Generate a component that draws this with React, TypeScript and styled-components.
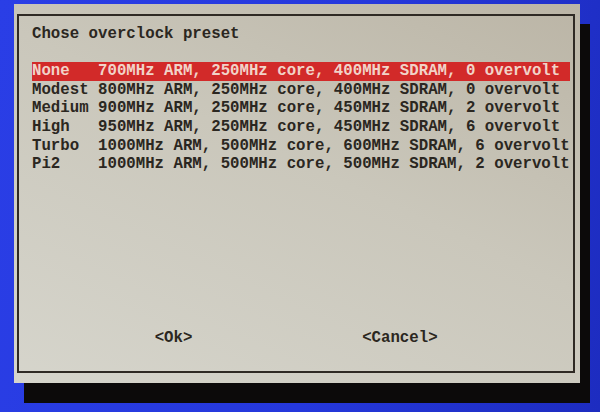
import React from 'react'
import styled, { createGlobalStyle } from 'styled-components'

const GlobalStyle = createGlobalStyle`
  html, body {
    margin: 0;
    padding: 0;
    background: #2436d8;
  }
`

const Screen = styled.div`
  width: 600px;
  height: 412px;
  box-sizing: border-box;
  padding: 4px 0 0 14px;
  background: linear-gradient(100deg, #2a3ee6 0%, #2538dc 55%, #1d2cc0 100%);
  overflow: hidden;
`

const Dialog = styled.section`
  width: 566px;
  height: 379px;
  box-sizing: border-box;
  padding: 10px 5px 10px 3px;
  display: flex;
  background: linear-gradient(205deg, #bbb5a6 0%, #cac7bb 45%, #d6d5cc 100%);
  box-shadow: 10px 20px 0 #0c0a0a;
`

const Frame = styled.div`
  flex: 1;
  display: flex;
  flex-direction: column;
  border: 2px solid #2f2a24;
  padding: 9px 0 0 13px;
  font-family: 'Liberation Mono', 'DejaVu Sans Mono', monospace;
  font-size: 15.72px;
  font-weight: bold;
  line-height: 18.6px;
  color: #2b2721;
  white-space: pre;
`

const Prompt = styled.div`
  margin-bottom: 18.6px;
`

const Menu = styled.ul`
  list-style: none;
  margin: 0;
  padding: 0;
  width: 57ch;
`

const Item = styled.li<{ $selected?: boolean }>`
  display: flex;
  background: ${({ $selected }) => ($selected ? '#d22a29' : 'transparent')};
  color: ${({ $selected }) => ($selected ? '#f1d3c8' : 'inherit')};
`

const Tag = styled.span`
  flex: none;
  width: 7ch;
`

const Buttons = styled.div`
  margin-top: auto;
  display: flex;
  gap: 18ch;
  padding: 0 0 23px 13ch;
`

const Button = styled.span``

const presets = [
  { tag: 'None', desc: '700MHz ARM, 250MHz core, 400MHz SDRAM, 0 overvolt' },
  { tag: 'Modest', desc: '800MHz ARM, 250MHz core, 400MHz SDRAM, 0 overvolt' },
  { tag: 'Medium', desc: '900MHz ARM, 250MHz core, 450MHz SDRAM, 2 overvolt' },
  { tag: 'High', desc: '950MHz ARM, 250MHz core, 450MHz SDRAM, 6 overvolt' },
  { tag: 'Turbo', desc: '1000MHz ARM, 500MHz core, 600MHz SDRAM, 6 overvolt' },
  { tag: 'Pi2', desc: '1000MHz ARM, 500MHz core, 500MHz SDRAM, 2 overvolt' },
]

export default function App() {
  return (
    <>
      <GlobalStyle />
      <Screen>
        <Dialog>
          <Frame>
            <Prompt>Chose overclock preset</Prompt>
            <Menu>
              {presets.map((p, i) => (
                <Item key={p.tag} $selected={i === 0}>
                  <Tag>{p.tag}</Tag>
                  <span>{p.desc}</span>
                </Item>
              ))}
            </Menu>
            <Buttons>
              <Button>{'<Ok>'}</Button>
              <Button>{'<Cancel>'}</Button>
            </Buttons>
          </Frame>
        </Dialog>
      </Screen>
    </>
  )
}
